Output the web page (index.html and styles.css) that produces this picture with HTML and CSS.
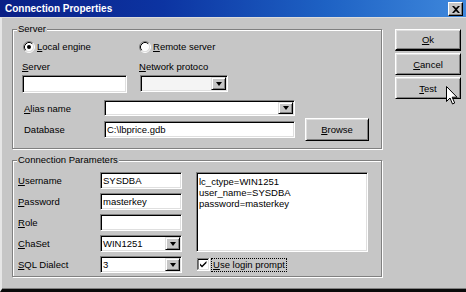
FILE: index.html
```html
<!DOCTYPE html>
<html>
<head>
<meta charset="utf-8">
<link rel="stylesheet" href="styles.css">
</head>
<body>
<div class="window">
  <div class="titlebar">
    <span class="title">Connection Properties</span>
    <span class="close"><svg width="8" height="7" viewBox="0 0 8 7"><path d="M0 0h2l2 2 2-2h2L5 3.5 8 7H6L4 5 2 7H0l3-3.5z" fill="#000"/></svg></span>
  </div>
  <div class="client">
    <div class="left">
      <div class="group server">
        <div class="gtitle">Server</div>
        <div class="radios">
          <label class="radio-item first">
            <svg class="radio" width="12" height="12" viewBox="0 0 12 12"><circle cx="6" cy="6" r="4.6" fill="#fff"/><path d="M2.11 9.89A5.5 5.5 0 0 1 9.89 2.11" fill="none" stroke="#808080"/><path d="M9.89 2.11A5.5 5.5 0 0 1 2.11 9.89" fill="none" stroke="#fff"/><path d="M2.82 9.18A4.5 4.5 0 0 1 9.18 2.82" fill="none" stroke="#000"/><path d="M9.18 2.82A4.5 4.5 0 0 1 2.82 9.18" fill="none" stroke="#dfdfdf"/><circle cx="6" cy="6" r="2" fill="#000"/></svg>
            <span><u>L</u>ocal engine</span>
          </label>
          <label class="radio-item">
            <svg class="radio" width="12" height="12" viewBox="0 0 12 12"><circle cx="6" cy="6" r="4.6" fill="#fff"/><path d="M2.11 9.89A5.5 5.5 0 0 1 9.89 2.11" fill="none" stroke="#808080"/><path d="M9.89 2.11A5.5 5.5 0 0 1 2.11 9.89" fill="none" stroke="#fff"/><path d="M2.82 9.18A4.5 4.5 0 0 1 9.18 2.82" fill="none" stroke="#000"/><path d="M9.18 2.82A4.5 4.5 0 0 1 2.82 9.18" fill="none" stroke="#dfdfdf"/></svg>
            <span><u>R</u>emote server</span>
          </label>
        </div>
        <div class="srv-labels">
          <span class="srv-l1"><u>S</u>erver</span>
          <span><u>N</u>etwork protoco</span>
        </div>
        <div class="srv-edits">
          <div class="edit srv-edit"></div>
          <div class="edit combo net-combo"><span class="val"></span><span class="cbtn"></span></div>
        </div>
        <div class="field-row alias-row">
          <span class="flabel"><u>A</u>lias name</span>
          <div class="edit combo wide"><span class="val"></span><span class="cbtn"></span></div>
        </div>
        <div class="field-row db-row">
          <span class="flabel">Database</span>
          <div class="edit wide db-edit"><span class="val">C:\lbprice.gdb</span></div>
          <div class="btn browse"><span><u>B</u>rowse</span></div>
        </div>
      </div>
      <div class="group params">
        <div class="gtitle">Connection Parameters</div>
        <div class="pbody">
          <div class="pcol">
            <div class="prow"><span class="plabel"><u>U</u>sername</span><div class="edit pedit"><span class="val">SYSDBA</span></div></div>
            <div class="prow"><span class="plabel"><u>P</u>assword</span><div class="edit pedit"><span class="val">masterkey</span></div></div>
            <div class="prow"><span class="plabel"><u>R</u>ole</span><div class="edit pedit"><span class="val"></span></div></div>
            <div class="prow"><span class="plabel"><u>C</u>haSet</span><div class="edit combo pedit"><span class="val">WIN1251</span><span class="cbtn"></span></div></div>
            <div class="prow"><span class="plabel"><u>S</u>QL Dialect</span><div class="edit combo pedit"><span class="val">3</span><span class="cbtn"></span></div></div>
          </div>
          <div class="rcol">
            <div class="edit memo">
              <div>lc_ctype=WIN1251</div>
              <div>user_name=SYSDBA</div>
              <div>password=masterkey</div>
            </div>
            <label class="check-row">
              <svg class="check" width="13" height="13" viewBox="0 0 13 13"><rect x="0" y="0" width="13" height="13" fill="#fff"/><path d="M0 12.5V0.5h12.5" fill="none" stroke="#808080"/><path d="M1 11.5V1.5h10.5" fill="none" stroke="#000"/><path d="M12.5 0v12.5H0" fill="none" stroke="#fff"/><path d="M11.5 1v10.5H1" fill="none" stroke="#dfdfdf"/><path d="M3 5.5l2 2 4.5-4.5v2L5 9.5l-2-2z" fill="#000"/></svg>
              <span class="focus"><u>U</u>se login prompt</span>
            </label>
          </div>
        </div>
      </div>
    </div>
    <div class="buttons">
      <div class="btn default"><span><u>O</u>k</span></div>
      <div class="btn"><span><u>C</u>ancel</span></div>
      <div class="btn"><span><u>T</u>est</span></div>
    </div>
  </div>
  <svg class="cursor" width="12" height="19" viewBox="0 0 12 19"><path d="M0.5 0.5V15.5L4 12l2.5 6 2.2-1-2.5-5.8H11z" fill="#fff" stroke="#000" stroke-linejoin="miter"/></svg>
</div>
</body>
</html>
```
FILE: styles.css
```css
html, body {
  margin: 0;
  padding: 0;
  background: #c6c6c6;
}

.window {
  position: relative;
  width: 466px;
  height: 292px;
  box-sizing: border-box;
  display: flex;
  flex-direction: column;
  background: #c6c6c6;
  font-family: "Liberation Sans", Arial, sans-serif;
  font-size: 9.5px;
  color: #000;
  overflow: hidden;
}

.titlebar {
  flex: none;
  height: 17px;
  display: flex;
  align-items: center;
  justify-content: space-between;
  padding: 0 3px 0 5px;
  background: linear-gradient(to right, #0a1f86 0%, #0c34a2 35%, #1e62c4 70%, #3f88dc 100%);
}

.title {
  color: #fff;
  font-weight: bold;
  font-size: 10px;
  letter-spacing: 0;
}

.close {
  width: 15px;
  height: 14px;
  box-sizing: border-box;
  margin-top: 1px;
  display: flex;
  align-items: center;
  justify-content: center;
  background: #c6c6c6;
  border-top: 1px solid #fff;
  border-left: 1px solid #fff;
  border-right: 1px solid #000;
  border-bottom: 1px solid #000;
  box-shadow: inset -1px -1px #808080;
}

.client {
  flex: 1;
  display: flex;
  align-items: flex-start;
  padding: 11px 0 0 10px;
  border-top: 1px solid #dcdcdc;
  border-left: 2px solid #e6e6e6;
  border-bottom: 3px solid #0a0a0a;
  box-shadow: inset 0 -1px #808080;
  box-sizing: border-box;
}

.left {
  width: 370px;
  display: flex;
  flex-direction: column;
}

.group {
  display: flex;
  flex-direction: column;
  border: 1px solid #808080;
  box-shadow: inset 1px 1px #fff, 1px 1px #fff;
}

.gtitle {
  align-self: flex-start;
  margin: -7px 0 0 4px;
  padding: 0 1px;
  line-height: 12px;
  height: 12px;
  background: #c6c6c6;
}

/* Server group */
.server {
  padding-bottom: 7px;
}

.radios {
  display: flex;
  align-items: center;
  height: 12px;
  margin-top: 6px;
  padding-left: 10px;
}

.radio-item {
  display: flex;
  align-items: center;
  gap: 2px;
  line-height: 12px;
}

.radio-item.first {
  width: 116px;
}

.radio {
  display: block;
  flex: none;
}

.srv-labels {
  display: flex;
  margin-top: 8px;
  padding-left: 9px;
  line-height: 12px;
  height: 12px;
}

.srv-l1 {
  width: 117px;
}

.srv-edits {
  display: flex;
  align-items: flex-start;
  margin-top: 2px;
  padding-left: 9px;
}

.edit {
  box-sizing: border-box;
  background: #fff;
  border-top: 1px solid #808080;
  border-left: 1px solid #808080;
  border-right: 1px solid #fff;
  border-bottom: 1px solid #fff;
  box-shadow: inset 1px 1px #000, inset -1px -1px #dfdfdf;
  display: flex;
  align-items: stretch;
}

.val {
  flex: 1;
  display: flex;
  align-items: center;
  padding-left: 2px;
  white-space: nowrap;
  overflow: hidden;
}

.srv-edit {
  width: 105px;
  height: 18px;
}

.net-combo {
  width: 88px;
  height: 17px;
  margin-left: 13px;
  background: #f4f4f4;
}

.cbtn {
  flex: none;
  width: 15px;
  margin: 1px;
  box-sizing: border-box;
  background: #c6c6c6;
  border-top: 1px solid #dfdfdf;
  border-left: 1px solid #dfdfdf;
  border-right: 1px solid #000;
  border-bottom: 1px solid #000;
  box-shadow: inset 1px 1px #fff, inset -1px -1px #808080;
  display: flex;
  align-items: center;
  justify-content: center;
}

.cbtn::after {
  content: "";
  width: 0;
  height: 0;
  border-left: 3.5px solid transparent;
  border-right: 3.5px solid transparent;
  border-top: 4px solid #000;
}

.field-row {
  display: flex;
  align-items: center;
  padding-left: 11px;
}

.alias-row {
  margin-top: 7px;
}

.db-row {
  margin-top: 2px;
  height: 23px;
}

.flabel {
  width: 80px;
  flex: none;
}

.wide {
  width: 191px;
  height: 17px;
}

.alias-row .wide {
  height: 16px;
}

.btn {
  box-sizing: border-box;
  display: flex;
  align-items: center;
  justify-content: center;
  background: #c6c6c6;
  border-top: 1px solid #fff;
  border-left: 1px solid #fff;
  border-right: 1px solid #000;
  border-bottom: 1px solid #000;
  box-shadow: inset 1px 1px #dfdfdf, inset -1px -1px #808080;
}

.browse {
  width: 64px;
  height: 23px;
  margin-left: 10px;
}

/* Params group */
.params {
  margin-top: 11px;
  padding-bottom: 3px;
}

.pbody {
  display: flex;
  align-items: flex-start;
  margin-top: 6px;
  padding-left: 5px;
}

.pcol {
  display: flex;
  flex-direction: column;
  gap: 4px;
}

.prow {
  display: flex;
  align-items: center;
  height: 17px;
}

.plabel {
  width: 82px;
  flex: none;
}

.pedit {
  width: 82px;
  height: 17px;
}

.rcol {
  margin-left: 14px;
  display: flex;
  flex-direction: column;
}

.memo {
  width: 172px;
  height: 80px;
  flex-direction: column;
  align-items: stretch;
  padding: 3px 2px 0 2px;
  line-height: 11px;
}

.check-row {
  display: flex;
  align-items: center;
  gap: 2px;
  height: 13px;
  margin-top: 6px;
  padding-left: 1px;
}

.check {
  display: block;
  flex: none;
}

.focus {
  outline: 1px dotted #000;
  outline-offset: 0;
  padding: 0 1px;
  line-height: 12px;
}

/* Buttons */
.buttons {
  margin-left: 13px;
  width: 66px;
  display: flex;
  flex-direction: column;
  gap: 2px;
}

.buttons .btn {
  height: 22px;
}

.buttons .btn.default {
  border-bottom-width: 2px;
}

.cursor {
  position: absolute;
  left: 446px;
  top: 86px;
}
```
